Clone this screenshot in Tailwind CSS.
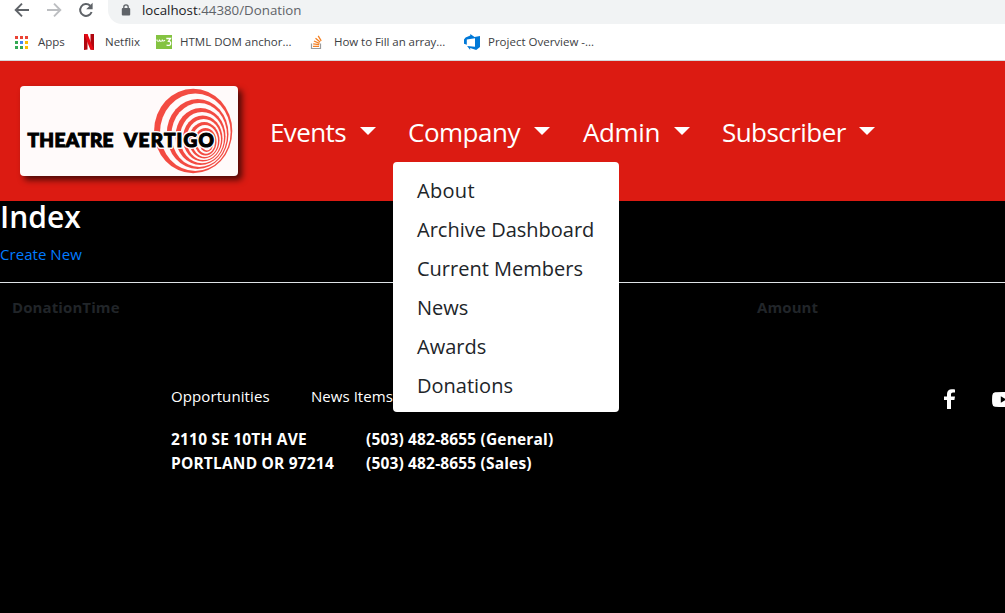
<!DOCTYPE html>
<html lang="en">
<head>
<meta charset="utf-8">
<title>Index</title>
<script src="https://cdn.jsdelivr.net/npm/@tailwindcss/browser@4"></script>
</head>
<body class="h-[613px] overflow-hidden bg-black font-['Open_Sans','Noto_Sans',sans-serif] text-white">
<div class="h-[61px] border-b border-[#d5d7da] bg-white text-[#3c4043]">
  <div class="flex h-6 items-start">
    <svg class="mt-[2px] ml-[14px] h-4 w-4" viewBox="0 0 16 16" fill="none" stroke="#5f6368" stroke-width="1.9"><path d="M15 8H2M8 1.7 1.7 8 8 14.3"/></svg>
    <svg class="mt-[2px] ml-4 h-4 w-4" viewBox="0 0 16 16" fill="none" stroke="#bcbec1" stroke-width="1.9"><path d="M1 8h13M8 1.7 14.3 8 8 14.3"/></svg>
    <svg class="mt-[2px] ml-4 h-4 w-4" viewBox="0 0 16 16"><path d="M13.6 10A5.900 5.900 0 1 1 12.200 3.800" fill="none" stroke="#5f6368" stroke-width="2"/><path d="M14.6.8v6.400H8.200z" fill="#5f6368"/></svg>
    <div class="ml-[14px] flex h-6 flex-1 items-start rounded-bl-[14px] bg-[#f1f3f4]">
      <svg class="mt-1 ml-[13px] h-3 w-[10px]" viewBox="0 0 10 12"><rect x=".8" y="4" width="8.4" height="7.6" rx="1" fill="#5f6368"/><path d="M2.8 5V3a2.2 2.2 0 0 1 4.4 0v2" fill="none" stroke="#5f6368" stroke-width="1.3"/></svg>
      <div class="ml-[11px] text-[13.3px] leading-5 whitespace-nowrap text-[#5f6368]"><span class="text-[#202124]">localhost</span>:44380/Donation</div>
    </div>
  </div>
  <div class="flex h-9 items-center text-[11.5px] whitespace-nowrap">
    <svg class="ml-[15px] h-[13px] w-[13px]" viewBox="0 0 13 13"><path fill="#ea4335" d="M0 0h3v3H0zM5 0h3v3H5zM10 0h3v3h-3z"/><path fill="#34a853" d="M0 5h3v3H0zM0 10h3v3H0zM5 10h3v3H5z"/><path fill="#4285f4" d="M5 5h3v3H5z"/><path fill="#fbbc05" d="M10 5h3v3h-3zM10 10h3v3h-3z"/></svg>
    <span class="ml-[10px] w-[46px]">Apps</span>
    <svg class="h-4 w-[10px]" viewBox="0 0 10 16"><path fill="#b1060f" d="M0 0h3.5v15.5L0 16zM6.5 0H10v16l-3.5-.5z"/><path fill="#e50914" d="M0 0h3.5L10 16l-3.7-.5z"/></svg>
    <span class="ml-[11px] w-[51px]">Netflix</span>
    <svg class="h-4 w-4" viewBox="0 0 16 16"><path fill="#84c341" d="M0 1h16v14H0z"/><path d="M1 5.500v1q1.200 1.500 2.500 0v-1M3.500 6.500q1.500 1.500 2.800 0v-1M6.300 6.500q1.300 1.200 2.700-.300" fill="none" stroke="#fff" stroke-width="1.100"/><path d="M10.300 4.500h4.200L12.500 7.300q2.500 0 2.100 2.700-.8 2.300-4.100 1" fill="none" stroke="#fff" stroke-width="1.300"/></svg>
    <span class="ml-2 w-[130px]">HTML DOM anchor...</span>
    <svg class="h-4 w-4" viewBox="0 0 16 16" fill="none"><path d="M1.500 9.500v5h9v-5" stroke="#9a9b9d" stroke-width="1.200"/><path d="M3 12.300h6M3.200 9.800l6 .9M3.900 7l5.600 2.300M5.500 4.300l4.600 3.800M8.200 1.800l3 5" stroke="#f48024" stroke-width="1.300"/></svg>
    <span class="ml-[8px] w-[130px] tracking-[-0.05px]">How to Fill an array...</span>
    <svg class="h-4 w-4" viewBox="0 0 16 16"><path fill="#0078d7" d="M0 5.500 1.600 3.500 6.300 1.600V0l4.200 2.900L16 2v11l-3.800 3-6-2v2L3.100 12 11 12.700V4.200L2.800 5.600v5.100L0 9.700z"/></svg>
    <span class="ml-2">Project Overview -...</span>
  </div>
</div>
<nav class="flex h-[140px] items-start bg-[#dc1b12]">
  <svg class="mt-[25px] ml-5 h-[90px] w-[218px] rounded-[4px] bg-[#fffafa] shadow-[4px_4px_6px_rgba(0,0,0,0.65)]" viewBox="0 0 218 90">
    <g fill="#f34b42">
      <ellipse cx="173.200" cy="45" rx="39.100" ry="42.300"/><ellipse cx="175.300" cy="46.300" rx="35.300" ry="38.700" fill="#fffafa"/>
      <ellipse cx="177.600" cy="48" rx="30.900" ry="35"/><ellipse cx="179.200" cy="49" rx="27.800" ry="32" fill="#fffafa"/>
      <ellipse cx="180.500" cy="50.500" rx="25" ry="28.500"/><ellipse cx="182" cy="51.600" rx="22" ry="25.700" fill="#fffafa"/>
      <ellipse cx="182.700" cy="52.500" rx="19.800" ry="23"/><ellipse cx="183.700" cy="53.500" rx="17.300" ry="20.500" fill="#fffafa"/>
      <ellipse cx="184.200" cy="54.200" rx="15.300" ry="18.200"/><ellipse cx="185" cy="55" rx="13" ry="16" fill="#fffafa"/>
      <ellipse cx="185.500" cy="55.800" rx="11" ry="13.700"/><ellipse cx="186" cy="56.200" rx="9" ry="11.500" fill="#fffafa"/>
      <ellipse cx="186.500" cy="57" rx="7" ry="9"/><ellipse cx="187" cy="57.500" rx="5" ry="7" fill="#fffafa"/>
    </g>
    <g font-family="Lato" font-weight="900" font-size="19" fill="#000" stroke="#fffafa" stroke-width="4" stroke-linejoin="round">
      <text x="7.500" y="61" textLength="86" lengthAdjust="spacing">THEATRE</text>
      <text x="104" y="61" textLength="90" lengthAdjust="spacing">VERTIGO</text>
    </g>
    <g font-family="Lato" font-weight="900" font-size="19" fill="#000" stroke="#000" stroke-width="1.100">
      <text x="7.500" y="61" textLength="86" lengthAdjust="spacing">THEATRE</text>
      <text x="104" y="61" textLength="90" lengthAdjust="spacing">VERTIGO</text>
    </g>
  </svg>
  <div class="mt-[51px] ml-[32px] flex text-[26px] leading-[40px] whitespace-nowrap">
    <div class="flex w-[138px]"><span class="w-[90px] tracking-[-0.6px]">Events</span><i class="mt-[15px] h-2 w-4 bg-white [clip-path:polygon(0_0,100%_0,50%_100%)]"></i></div>
    <div class="relative flex w-[174px]"><span class="w-[126px] tracking-[-0.5px]">Company</span><i class="mt-[15px] h-2 w-4 bg-white [clip-path:polygon(0_0,100%_0,50%_100%)]"></i>
      <div class="absolute top-[50px] left-[-15px] z-10 h-[250px] w-[226px] rounded-[4px] bg-white px-6 pt-[9px] text-[20px] leading-[39px] text-[#212529]">
        <div class="tracking-[0.3px]">About</div><div>Archive Dashboard</div><div>Current Members</div><div>News</div><div>Awards</div><div>Donations</div>
      </div>
    </div>
    <div class="flex w-[139px]"><span class="w-[92px] pl-px tracking-[-0.4px]">Admin</span><i class="mt-[15px] h-2 w-4 bg-white [clip-path:polygon(0_0,100%_0,50%_100%)]"></i></div>
    <div class="flex"><span class="w-[138px] pl-px tracking-[-0.55px]">Subscriber</span><i class="mt-[15px] h-2 w-4 bg-white [clip-path:polygon(0_0,100%_0,50%_100%)]"></i></div>
  </div>
</nav>
<main>
  <h1 class="h-[42px] text-[30px] leading-[32px] font-semibold">Index</h1>
  <div class="h-[39px] text-[15px] leading-[23px] tracking-[0.05px] text-[#007bff]">Create New</div>
  <div class="flex h-[102px] border-t border-[#dee2e6] pt-3 text-[15px] leading-6 font-bold tracking-[0.1px] text-[#212529]">
    <span class="w-[745px] pl-3">DonationTime</span><span class="pl-3">Amount</span>
  </div>
</main>
<footer class="pl-[171px] text-[15px] leading-6 whitespace-nowrap">
  <div class="flex h-[43px]">
    <span class="w-[140px] shrink-0 tracking-[0.1px]">Opportunities</span><span class="w-[632px] shrink-0 tracking-[0.05px]">News Items</span>
    <svg class="mt-[5px] h-[20px] w-[14px] shrink-0" viewBox="0 0 14 20" fill="#fff"><path d="M4 20v-9H1V7.500h3V5c0-3.200 1.900-4.800 4.700-4.800 1.400 0 3.300.2 3.300.2v3h-1.900C8.300 3.400 8 4.500 8 5.300v2.200h4l-.6 3.500H8v9z"/></svg>
    <svg class="mt-2 ml-[35px] h-[15px] w-[22px] shrink-0" viewBox="0 0 22 15" fill="#fff"><path fill-rule="evenodd" d="M3 .3Q11-.3 19 .3q2.500.3 2.700 3 .5 4.200 0 8.400-.2 2.700-2.700 3-8 .6-16 0Q.500 14.400.3 11.700q-.5-4.200 0-8.400Q.5.600 3 .3zM8.800 4.300v6.400l5.600-3.200z"/></svg>
  </div>
  <div class="flex text-[15.5px] font-bold tracking-[0.19px]"><div class="w-[195px]"><div>2110 SE 10TH AVE</div><div>PORTLAND OR 97214</div></div><div class="tracking-[0.16px]"><div>(503) 482-8655 (General)</div><div>(503) 482-8655 (Sales)</div></div></div>
</footer>
</body>
</html>
